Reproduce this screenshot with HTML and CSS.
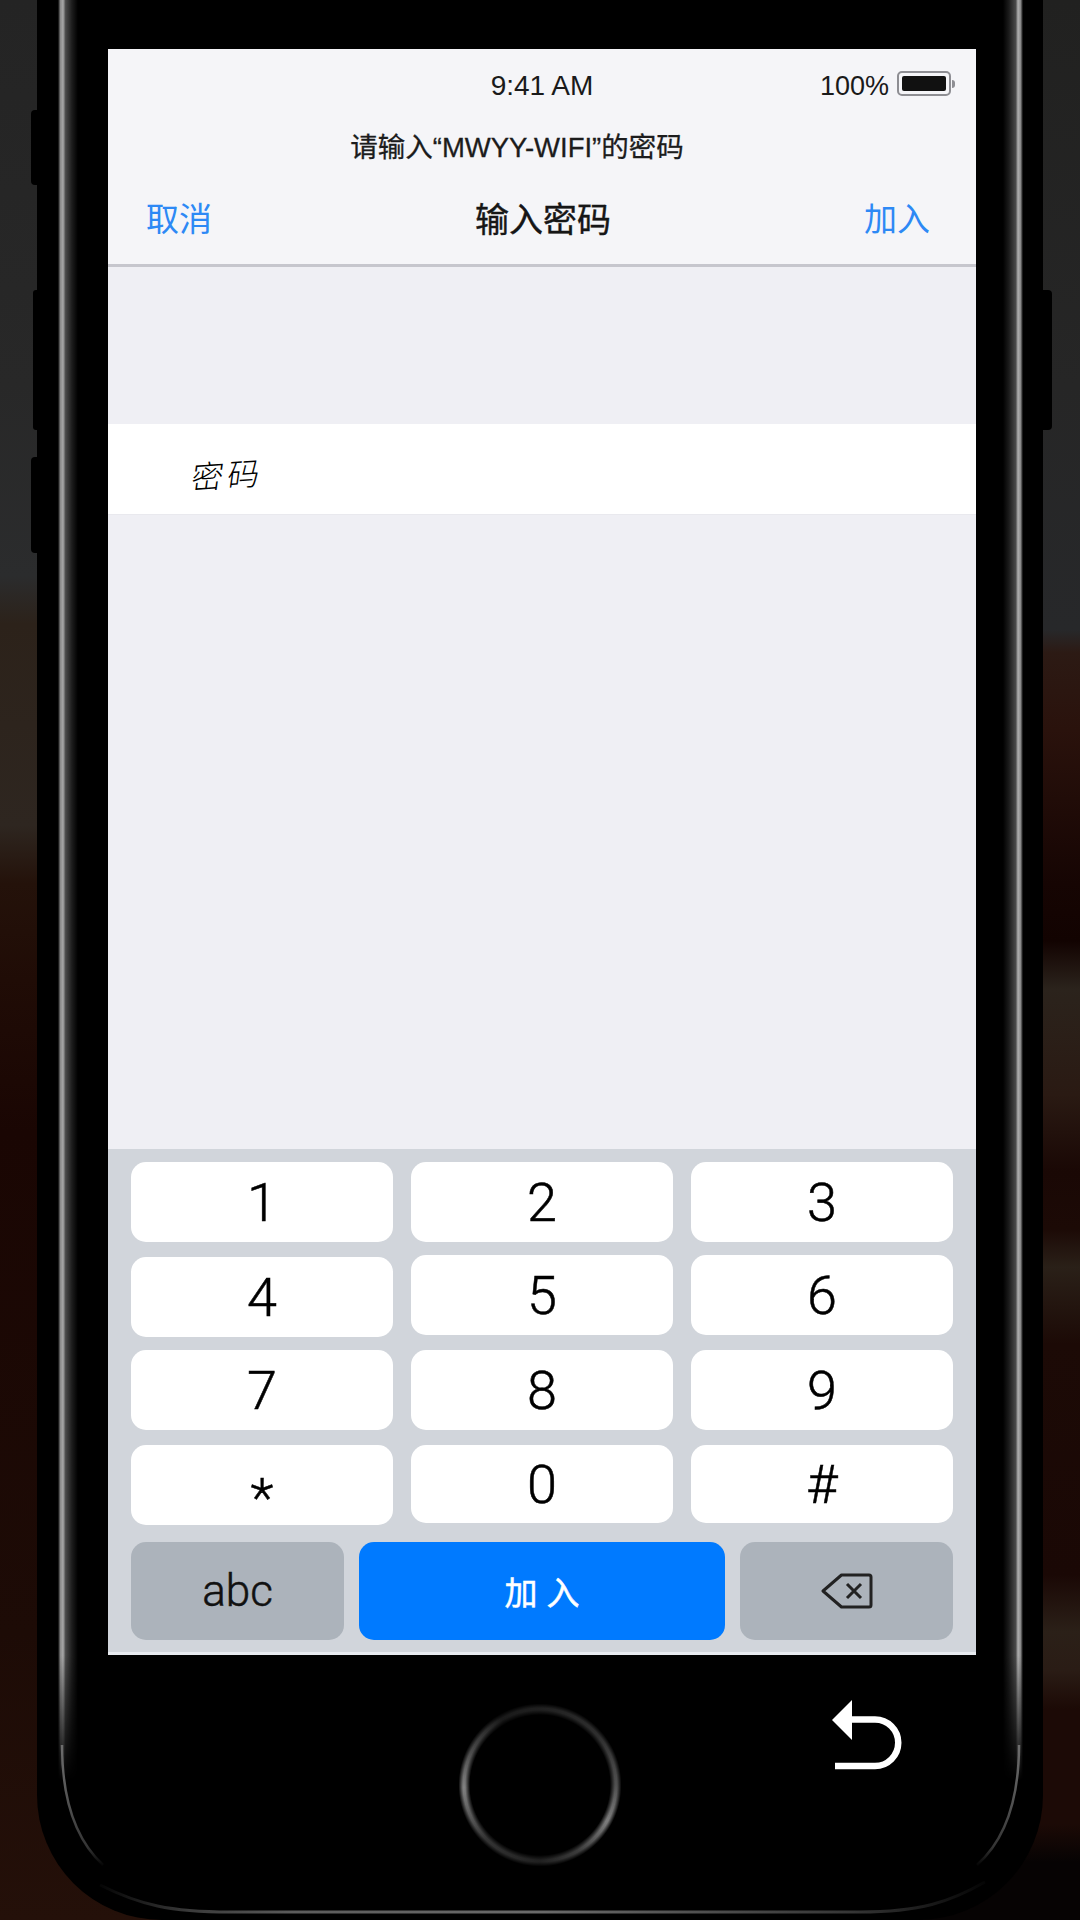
FILE: index.html
```html
<!DOCTYPE html>
<html lang="zh-CN">
<head>
<meta charset="utf-8">
<title>输入密码</title>
<link rel="stylesheet" href="styles.css">
</head>
<body>
<div class="phone">
  <span class="side side-l1"></span>
  <span class="side side-l2"></span>
  <span class="side side-l3"></span>
  <span class="side side-r1"></span>
  <svg class="glare" width="1006" height="1920" viewBox="37 0 1006 1920" aria-hidden="true">
    <defs>
      <linearGradient id="gl" x1="0" x2="1" y1="0" y2="0">
        <stop offset="0" stop-color="#000"/>
        <stop offset=".12" stop-color="#8a8a8a"/>
        <stop offset=".25" stop-color="#a8a8a8"/>
        <stop offset=".38" stop-color="#4a4a4a"/>
        <stop offset=".7" stop-color="#1c1c1c"/>
        <stop offset="1" stop-color="#000"/>
      </linearGradient>
      <linearGradient id="gr" x1="1" x2="0" y1="0" y2="0">
        <stop offset="0" stop-color="#000"/>
        <stop offset=".12" stop-color="#8a8a8a"/>
        <stop offset=".25" stop-color="#b0b0b0"/>
        <stop offset=".36" stop-color="#4a4a4a"/>
        <stop offset=".7" stop-color="#1c1c1c"/>
        <stop offset="1" stop-color="#000"/>
      </linearGradient>
      <linearGradient id="fade" x1="0" x2="0" y1="0" y2="1">
        <stop offset="0" stop-color="#fff"/>
        <stop offset=".93" stop-color="#fff"/>
        <stop offset="1" stop-color="#000"/>
      </linearGradient>
      <mask id="vfade" maskUnits="userSpaceOnUse" x="37" y="0" width="1006" height="1920">
        <rect x="37" y="0" width="1006" height="1780" fill="url(#fade)"/>
      </mask>
      <linearGradient id="cl" x1="0" x2="0" y1="0" y2="1">
        <stop offset="0" stop-color="#6e6e6e"/>
        <stop offset=".5" stop-color="#505050"/>
        <stop offset=".85" stop-color="#343434"/>
        <stop offset="1" stop-color="#050505"/>
      </linearGradient>
      <linearGradient id="bot" x1="0" x2="1" y1="0" y2="0">
        <stop offset="0" stop-color="#050505"/>
        <stop offset=".1" stop-color="#3a3a3a"/>
        <stop offset=".22" stop-color="#5c5c5c"/>
        <stop offset=".5" stop-color="#6a6a6a"/>
        <stop offset=".85" stop-color="#363636"/>
        <stop offset="1" stop-color="#050505"/>
      </linearGradient>
    </defs>
    <g mask="url(#vfade)">
      <rect x="58" y="0" width="20" height="1780" fill="url(#gl)"/>
      <rect x="1003" y="0" width="20" height="1780" fill="url(#gr)"/>
    </g>
    <path d="M62 1745C62 1800 76 1840 103 1865" class="glare-curve" stroke="url(#cl)"/>
    <path d="M1019 1745C1019 1800 1005 1840 977 1865" class="glare-curve" stroke="url(#cl)"/>
    <path d="M100 1885C140 1905 170 1912 230 1912H860C920 1912 950 1902 985 1882" class="glare-bottom" stroke="url(#bot)"/>
  </svg>

  <main class="screen">
    <header class="header">
      <div class="status">
        <span></span>
        <span class="time">9:41 AM</span>
        <span class="status-right">
          <span class="percent">100%</span>
          <span class="battery"><span class="battery-fill"></span></span>
          <span class="battery-nub"></span>
        </span>
      </div>
      <div class="prompt">请输入“MWYY-WIFI”的密码</div>
      <nav class="nav">
        <span class="nav-link">取消</span>
        <span class="nav-title">输入密码</span>
        <span class="nav-link nav-link-end">加入</span>
      </nav>
    </header>

    <section class="content">
      <div class="field"><span class="field-label">密码</span></div>
    </section>

    <section class="keyboard">
      <div class="keys">
        <div class="key">1</div>
        <div class="key">2</div>
        <div class="key">3</div>
        <div class="key key-down">4</div>
        <div class="key key-up">5</div>
        <div class="key key-up">6</div>
        <div class="key">7</div>
        <div class="key">8</div>
        <div class="key">9</div>
        <div class="key key-star"><span>*</span></div>
        <div class="key key-short">0</div>
        <div class="key key-short">#</div>
      </div>
      <div class="actions">
        <div class="action action-muted">abc</div>
        <div class="action action-primary">加入</div>
        <div class="action action-muted">
          <svg width="52" height="36" viewBox="0 0 52 36" aria-hidden="true">
            <path d="M2 18 20.5 2H48a2 2 0 0 1 2 2V32a2 2 0 0 1-2 2H20.5Z" class="backspace-line"/>
            <path d="M26 11 40 25M40 11 26 25" class="backspace-line"/>
          </svg>
        </div>
      </div>
    </section>
  </main>

  <footer class="bezel">
    <div class="home"></div>
    <svg class="back" width="72" height="72" viewBox="0 0 72 72" aria-hidden="true">
      <path d="M0 20 20 0V40Z" class="back-head"/>
      <path d="M19 19.500H43A23.200 23.200 0 0 1 43 66H3" class="back-line"/>
    </svg>
  </footer>
</div>
</body>
</html>
```
FILE: styles.css
```css
* { box-sizing: border-box; }

html, body { margin: 0; height: 100%; }

body {
  width: 1080px;
  height: 1920px;
  overflow: hidden;
  font-family: "Liberation Sans", "Noto Sans CJK SC", sans-serif;
  color: #111;
  background:
    linear-gradient(180deg, #242424 0, #282828 20%, #2b2c2d 30%, #2c221a 32.500%, #2e2620 43%, #24120a 46%, #200c06 51%, #1a0603 59%, #1d0b06 85%, #241009 100%) left top / 50% 100% no-repeat,
    linear-gradient(180deg, #212120 0, #262626 20%, #27282a 32.800%, #2c1a14 34%, #2a120c 38%, #160503 46%, #120301 49%, #2b231c 51.500%, #2a1a13 57%, #1a0805 61%, #1c0a06 64%, #2a2018 66%, #1c0a06 70%, #1a0805 82%, #2b2018 85%, #2a1c15 87%, #1c0a06 89%, #1c0a06 95%, #060303 97%, #060303 100%) right top / 50% 100% no-repeat;
}

.phone {
  position: relative;
  width: 1006px;
  height: 1920px;
  margin-left: 37px;
  background: #000;
  border-radius: 0 0 125px 125px;
  display: flex;
  flex-direction: column;
  align-items: flex-start;
  padding: 49px 0 0 71px;
}

.side { position: absolute; background: #000; }
.side-l1 { left: -6px; top: 110px; width: 6px; height: 75px; border-radius: 4px 0 0 4px; }
.side-l2 { left: -4px; top: 290px; width: 4px; height: 140px; border-radius: 3px 0 0 3px; }
.side-l3 { left: -6px; top: 457px; width: 6px; height: 96px; border-radius: 4px 0 0 4px; }
.side-r1 { right: -9px; top: 290px; width: 9px; height: 140px; border-radius: 0 4px 4px 0; }

.glare { position: absolute; left: 0; top: 0; }
.glare-curve { fill: none; stroke-width: 2.500; filter: blur(0.6px); }
.glare-bottom { fill: none; stroke-width: 3; filter: blur(0.6px); }

.screen {
  position: relative;
  width: 868px;
  height: 1606px;
  display: flex;
  flex-direction: column;
  background: #efeff4;
}

.header {
  height: 218px;
  flex: none;
  background: #f5f5f8;
  border-bottom: 3px solid #c6c6cd;
  display: flex;
  flex-direction: column;
}

.status {
  height: 40px;
  margin-top: 17px;
  display: grid;
  grid-template-columns: 1fr auto 1fr;
  align-items: center;
  font-size: 28px;
  color: #1a1a1a;
}

.time { line-height: 40px; }

.status-right {
  display: flex;
  align-items: center;
  justify-content: flex-end;
  padding-right: 21px;
}

.percent { margin-right: 8px; font-size: 27px; }

.battery {
  width: 54px;
  height: 25px;
  padding: 3px;
  margin-top: -5px;
  border: 2px solid #8e8e93;
  border-radius: 5px;
  display: block;
}

.battery-fill { display: block; height: 100%; background: #111; border-radius: 2px; }

.battery-nub {
  width: 3px;
  height: 8px;
  margin: -5px 0 0 1px;
  background: #8e8e93;
  border-radius: 0 3px 3px 0;
}

.prompt {
  height: 40px;
  margin-top: 22px;
  padding-right: 50px;
  line-height: 40px;
  text-align: center;
  font-size: 27.500px;
  color: #1c1c1c;
  -webkit-text-stroke: 0.3px #1c1c1c;
}

.nav {
  height: 50px;
  margin-top: 27px;
  padding: 0 46px 0 38px;
  display: grid;
  grid-template-columns: 1fr auto 1fr;
  align-items: center;
  font-size: 33px;
  line-height: 50px;
}

.nav-link { color: #2d89f5; }
.nav-link-end { text-align: right; }

.nav-title {
  padding-left: 10px;
  font-size: 34px;
  color: #161616;
  -webkit-text-stroke: 0.4px #161616;
}

.content { flex: 1; padding-top: 157px; }

.field {
  height: 91px;
  background: #fff;
  padding-left: 84px;
  border-bottom: 1px solid #e9e9ee;
  display: flex;
  align-items: center;
}

.field-label {
  display: inline-block;
  margin-top: 7px;
  font-size: 32px;
  font-weight: 300;
  letter-spacing: 4px;
  color: #000;
  transform: skew(-8deg, -4deg);
}

.keyboard {
  height: 506px;
  flex: none;
  padding: 13px 23px 0;
  background: #d1d5db;
  border-bottom: 3px solid #e8ebf0;
}

.keys {
  display: grid;
  grid-template-columns: repeat(3, 262px);
  grid-template-rows: 94px 94px 95px 80px;
  column-gap: 18px;
}

.key {
  height: 80px;
  background: #fff;
  border-radius: 15px;
  display: flex;
  align-items: center;
  justify-content: center;
  font-family: Roboto, "Liberation Sans", sans-serif;
  font-weight: 300;
  font-size: 54px;
  color: #000;
  -webkit-text-stroke: 0.5px #000;
}

.key-down { margin-top: 1px; }
.key-up { margin-top: -1px; }
.key-short { height: 78px; }
.key-star span { padding-top: 24px; }

.actions {
  display: grid;
  grid-template-columns: 213px 366px 213px;
  column-gap: 15px;
  margin-top: 17px;
}

.action {
  height: 98px;
  border-radius: 15px;
  display: flex;
  align-items: center;
  justify-content: center;
}

.action-muted {
  background: #acb3bb;
  font-family: Roboto, "Liberation Sans", sans-serif;
  font-weight: 300;
  font-size: 44px;
  color: #111;
  -webkit-text-stroke: 0.5px #111;
}

.action-primary {
  background: #007aff;
  color: #fff;
  font-size: 33px;
  letter-spacing: 9px;
  padding-left: 9px;
  -webkit-text-stroke: 0.5px #fff;
}

.backspace-line {
  fill: none;
  stroke: #222;
  stroke-width: 3;
  stroke-linejoin: round;
}

.bezel {
  position: relative;
  display: flex;
  align-items: flex-start;
  padding: 45px 0 0 350px;
}

.home {
  width: 164px;
  height: 164px;
  margin-top: 3px;
  border-radius: 50%;
  background: conic-gradient(#202020 0deg, #2e2e2e 50deg, #505050 90deg, #7c7c7c 118deg, #3c3c3c 150deg, #202020 180deg, #343434 225deg, #808080 268deg, #444 300deg, #1a1a1a 330deg, #202020 360deg);
  -webkit-mask: radial-gradient(circle, transparent 70px, #000 75px, #000 77px, transparent 81.500px);
  mask: radial-gradient(circle, transparent 70px, #000 75px, #000 77px, transparent 81.500px);
}

.back { margin-left: 210px; flex: none; }
.back-head { fill: #fff; }
.back-line { fill: none; stroke: #fff; stroke-width: 6.500; }
```
